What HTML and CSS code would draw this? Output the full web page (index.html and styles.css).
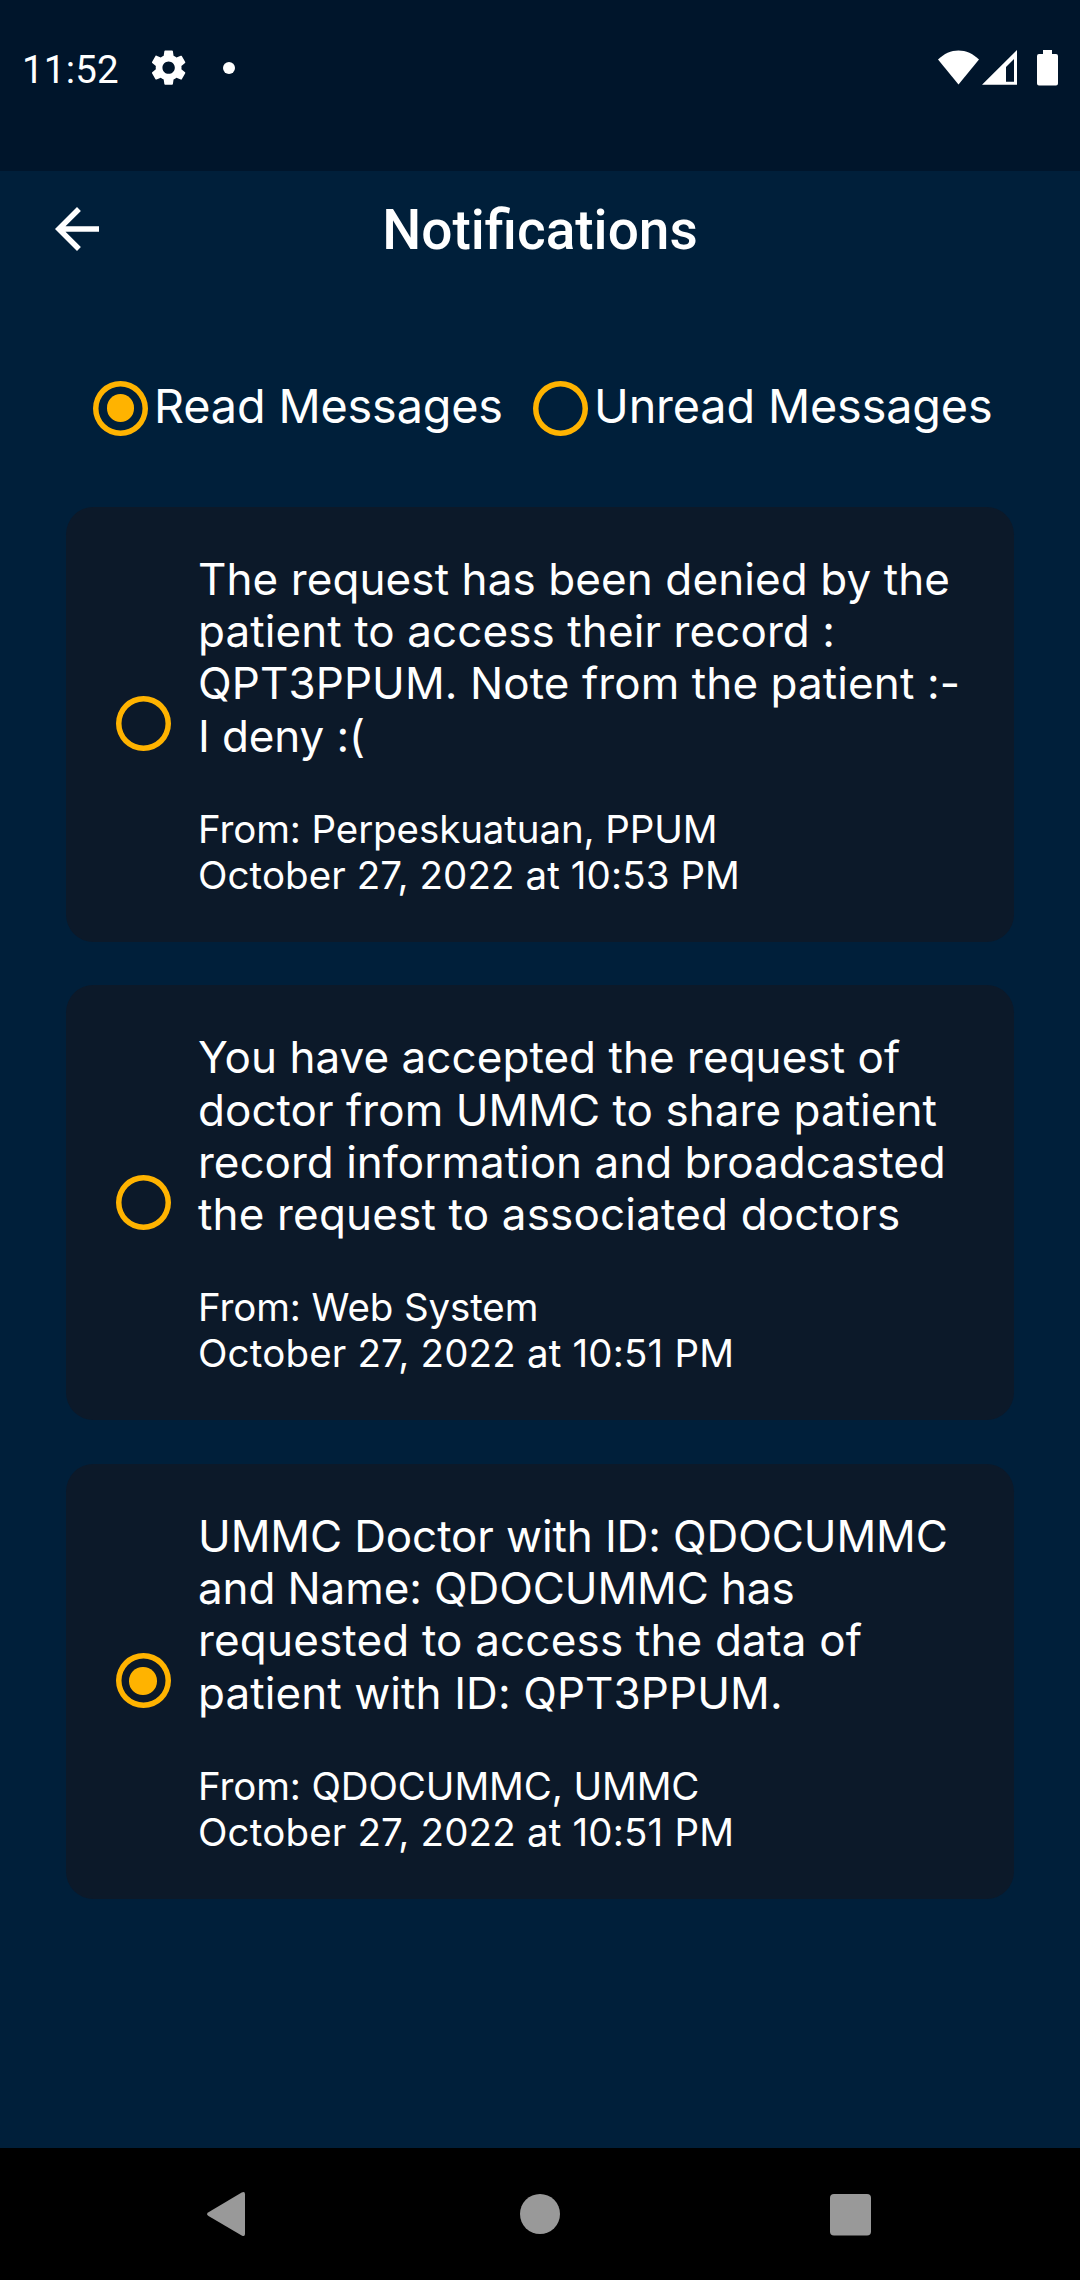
FILE: index.html
```html
<!DOCTYPE html>
<html lang="en">
<head>
<meta charset="utf-8">
<title>Notifications</title>
<link rel="stylesheet" href="styles.css">
</head>
<body>
<div class="screen">
  <header class="status-bar">
    <div class="status-left">
      <span class="clock">11:52</span>
      <svg class="gear" viewBox="0 0 24 24"><path d="M19.43 12.98c.04-.32.07-.64.07-.98s-.03-.66-.07-.98l2.11-1.65c.19-.15.24-.42.12-.64l-2-3.46c-.12-.22-.39-.3-.61-.22l-2.49 1c-.52-.4-1.08-.73-1.69-.98l-.38-2.65C14.46 2.18 14.25 2 14 2h-4c-.25 0-.46.18-.49.42l-.38 2.65c-.61.25-1.17.59-1.69.98l-2.49-1c-.23-.09-.49 0-.61.22l-2 3.46c-.13.22-.07.49.12.64l2.11 1.65c-.04.32-.07.65-.07.98s.03.66.07.98l-2.11 1.65c-.19.15-.24.42-.12.64l2 3.46c.12.22.39.3.61.22l2.49-1c.52.4 1.08.73 1.69.98l.38 2.65c.03.24.24.42.49.42h4c.25 0 .46-.18.49-.42l.38-2.65c.61-.25 1.17-.59 1.69-.98l2.49 1c.23.09.49 0 .61-.22l2-3.46c.12-.22.07-.49-.12-.64l-2.11-1.65zM12 15.6c-1.98 0-3.6-1.62-3.6-3.6s1.62-3.6 3.6-3.6 3.6 1.62 3.6 3.6-1.62 3.6-3.6 3.6z"/></svg>
      <span class="dot"></span>
    </div>
    <div class="status-right">
      <svg class="wifi" viewBox="0 0 41 35"><path d="M0 9.5C6 3.5 13 .4 20.5 .4S35 3.5 41 9.5L20.5 34.6z"/></svg>
      <svg class="signal" viewBox="0 0 35 35"><path fill-rule="evenodd" d="M35 0V34.7H0zM32 9L24 17V31.7H32z"/></svg>
      <svg class="battery" viewBox="0 0 21 36"><path d="M6 0h9v4h4a2 2 0 0 1 2 2v27.5a2 2 0 0 1-2 2H2a2 2 0 0 1-2-2V6a2 2 0 0 1 2-2h4z"/></svg>
    </div>
  </header>

  <div class="app-bar">
    <svg class="back" viewBox="0 0 24 24"><path d="M20 11H7.83l5.59-5.59L12 4l-8 8 8 8 1.41-1.41L7.83 13H20v-2z"/></svg>
    <h1 class="title">Notifications</h1>
  </div>

  <main class="content">
    <div class="filters">
      <div class="filter"><span class="radio checked"></span><span class="filter-label">Read Messages</span></div>
      <div class="filter"><span class="radio"></span><span class="filter-label">Unread Messages</span></div>
    </div>

    <div class="cards">
      <article class="card">
        <span class="radio"></span>
        <div class="card-body">
          <p class="message"><span class="loose">The request has been denied by the<br>patient to access their record :<br>QPT3PPUM. Note from the patient :-</span><br><span class="tight">I deny :(</span></p>
          <p class="meta"><span class="tight">From: Perpeskuatuan, PPUM</span><br><span class="loose">October 27, 2022 at 10:53 PM</span></p>
        </div>
      </article>
      <article class="card">
        <span class="radio"></span>
        <div class="card-body">
          <p class="message"><span class="snug">You have accepted the request of<br>doctor from UMMC to share patient</span><br>record information and broadcasted<br><span class="looser">the request to associated doctors</span></p>
          <p class="meta"><span class="tight">From: Web System</span><br><span class="looser">October 27, 2022 at 10:51 PM</span></p>
        </div>
      </article>
      <article class="card">
        <span class="radio checked"></span>
        <div class="card-body">
          <p class="message"><span class="tight">UMMC Doctor with ID: QDOCUMMC<br>and Name: QDOCUMMC has</span><br><span class="looser">requested to access the data of</span><br><span class="loose">patient with ID: QPT3PPUM.</span></p>
          <p class="meta"><span class="tight">From: QDOCUMMC, UMMC</span><br><span class="looser">October 27, 2022 at 10:51 PM</span></p>
        </div>
      </article>
    </div>
  </main>

  <nav class="nav-bar">
    <svg class="nav-icon" viewBox="-8 -8 64 64"><path d="M10.5 22.2 43.7 2.6Q47 1 47 4.200V44Q47 47.200 43.700 45.500L10.500 26Q7.500 24 10.500 22.200z"/></svg>
    <svg class="nav-icon" viewBox="0 0 64 64"><circle cx="32" cy="32" r="20"/></svg>
    <svg class="nav-icon" viewBox="0 0 64 64"><rect x="4" y="12" width="41" height="41.500" rx="4"/></svg>
  </nav>
</div>
</body>
</html>
```
FILE: styles.css
```css
* {
  box-sizing: border-box;
}

body {
  margin: 0;
  background: #001f3a;
  color: #fff;
  font-family: Inter, "Liberation Sans", sans-serif;
}

.screen {
  width: 1080px;
  height: 2280px;
  display: flex;
  flex-direction: column;
  overflow: hidden;
}

svg {
  display: block;
  fill: currentColor;
  flex: none;
}

.status-bar {
  height: 171px;
  flex: none;
  padding: 46px 22px 0;
  display: flex;
  justify-content: space-between;
  background: #00152b;
}

.status-left,
.status-right {
  height: 43px;
  display: flex;
  align-items: center;
}

.clock {
  width: 126px;
  font: 400 38.5px/46px Roboto, sans-serif;
  letter-spacing: 0.2px;
  padding-top: 4px;
}

.gear {
  width: 41.25px;
  height: 41.25px;
}

.dot {
  width: 12px;
  height: 12px;
  margin-left: 34px;
  border-radius: 50%;
  background: #fff;
}

.wifi {
  width: 41px;
  height: 35px;
}

.signal {
  width: 35px;
  height: 35px;
  margin-left: 3px;
}

.battery {
  width: 21px;
  height: 36px;
  margin-left: 20px;
}

.app-bar {
  height: 117px;
  flex: none;
  padding: 0 44px;
  display: grid;
  grid-template-columns: 66px 1fr 66px;
  align-items: center;
}

.back {
  width: 66px;
  height: 66px;
  margin-bottom: 1px;
}

.title {
  margin: 0;
  font: 500 55px/64px Roboto, sans-serif;
  text-align: center;
}

.content {
  flex: 1;
  padding: 80px 66px 0;
}

.filters {
  height: 80px;
  padding-left: 27px;
  display: flex;
  align-items: center;
}

.filter {
  width: 440px;
  display: flex;
  align-items: center;
  gap: 6px;
  white-space: nowrap;
}

.filter-label {
  font-size: 46.75px;
  line-height: 56px;
  letter-spacing: -0.15px;
  padding-bottom: 5px;
}

.radio {
  width: 55px;
  height: 55px;
  flex: none;
  display: grid;
  place-items: center;
  border-radius: 50%;
  box-shadow: inset 0 0 0 5.5px #ffb300;
}

.checked::before {
  content: "";
  width: 27.5px;
  height: 27.5px;
  border-radius: 50%;
  background: #ffb300;
}

.cards {
  padding-top: 59px;
  display: flex;
  flex-direction: column;
  gap: 43.8px;
}

.card {
  height: 434.7px;
  padding: 45.8px 0 0 49.5px;
  display: grid;
  grid-template-columns: 55px 1fr;
  column-gap: 27.5px;
  border-radius: 27.5px;
  background: #0c1929;
}

.card .radio {
  align-self: center;
  margin-bottom: 46.8px;
}

.card-body {
  display: flex;
  flex-direction: column;
  gap: 43.6px;
  white-space: nowrap;
}

.message,
.meta {
  margin: 0;
}

.message {
  font-size: 44px;
  line-height: 52.33px;
}

.meta {
  font-size: 38.5px;
  line-height: 46.2px;
}

.tight {
  letter-spacing: -0.11px;
}

.snug {
  letter-spacing: 0.04px;
}

.loose {
  letter-spacing: 0.09px;
}

.looser {
  letter-spacing: 0.17px;
}

.nav-bar {
  height: 132px;
  flex: none;
  padding: 0 190px;
  display: flex;
  align-items: center;
  justify-content: space-between;
  color: #999;
  background: #000;
}

.nav-icon {
  width: 64px;
  height: 64px;
}
```
